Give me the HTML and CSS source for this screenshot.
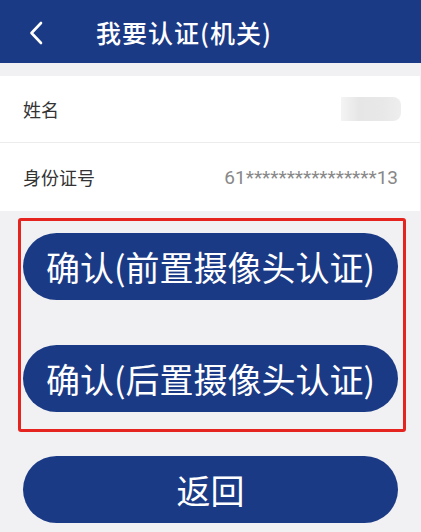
FILE: index.html
```html
<!DOCTYPE html>
<html lang="zh-CN">
<head>
    <meta charset="UTF-8">
    <meta name="viewport" content="width=device-width, initial-scale=1.0">
    <title>我要认证(机关)</title>
    <link rel="stylesheet" href="styles.css">
</head>
<body>
    <div class="topbar">
        <span class="topbar-back">
            <svg width="14" height="24" viewBox="0 0 14 24">
                <path d="M12 2 L2.5 12 L12 22" fill="none" stroke="#fff" stroke-width="2.6" stroke-linecap="round" stroke-linejoin="round"/>
            </svg>
        </span>
        <div class="topbar-title">我要认证(机关)</div>
    </div>

    <div class="page">
        <div class="info">
            <div class="info-row">
                <span class="info-label">姓名</span>
                <span class="info-blur"></span>
            </div>
            <div class="info-row">
                <span class="info-label">身份证号</span>
                <span class="info-value">61****************13</span>
            </div>
        </div>

        <div class="highlight">
            <button type="button" class="btn">确认(前置摄像头认证)</button>
            <button type="button" class="btn">确认(后置摄像头认证)</button>
        </div>

        <button type="button" class="btn btn-back">返回</button>
    </div>
</body>
</html>
```

FILE: styles.css
```css
body {
    margin: 0;
    font-family: Roboto, "Noto Sans CJK SC", sans-serif;
    background-color: #f1f1f3;
    height: 532px;
    overflow: hidden;
}

.topbar {
    height: 63px;
    background-color: #1b3a86;
    display: flex;
    align-items: center;
    color: #fff;
}

.topbar-back {
    display: flex;
    margin-left: 29px;
    margin-top: 2px;
}

.topbar-title {
    margin-left: 53px;
    font-family: "Noto Sans CJK SC", sans-serif;
    font-size: 25px;
    font-weight: 500;
    letter-spacing: 1px;
}

.page {
    padding-top: 13px;
}

.info {
    background-color: #fff;
    margin-right: 1px;
}

.info-row {
    height: 66px;
    padding: 0 23px;
    display: flex;
    align-items: center;
    justify-content: space-between;
    border-bottom: 1px solid #ececee;
}

.info-row:last-child {
    height: 68px;
    border-bottom: none;
}

.info-label {
    font-size: 18px;
    color: #333;
}

.info-value {
    font-size: 19px;
    color: #888;
    margin-right: -1px;
}

.info-blur {
    width: 60px;
    height: 24px;
    margin-right: -4px;
    background: linear-gradient(90deg, #f4f4f4 0%, #e6e6e6 30%, #e8e8e8 70%, #eeeeee 100%);
    border-radius: 0 8px 8px 0;
}

.highlight {
    margin: 7px 15px 0 18px;
    padding: 12px 5px 17px 2px;
    border: 3px solid #e5231f;
    border-radius: 3px;
    display: flex;
    flex-direction: column;
    gap: 45px;
}

.btn {
    display: block;
    width: 375px;
    height: 67px;
    border: none;
    border-radius: 34px;
    background-color: #1b3a86;
    color: #fff;
    font-family: "Noto Sans CJK SC", sans-serif;
    font-size: 34px;
    padding: 0;
    cursor: pointer;
}

.btn-back {
    margin: 24px 0 0 23px;
}
```
